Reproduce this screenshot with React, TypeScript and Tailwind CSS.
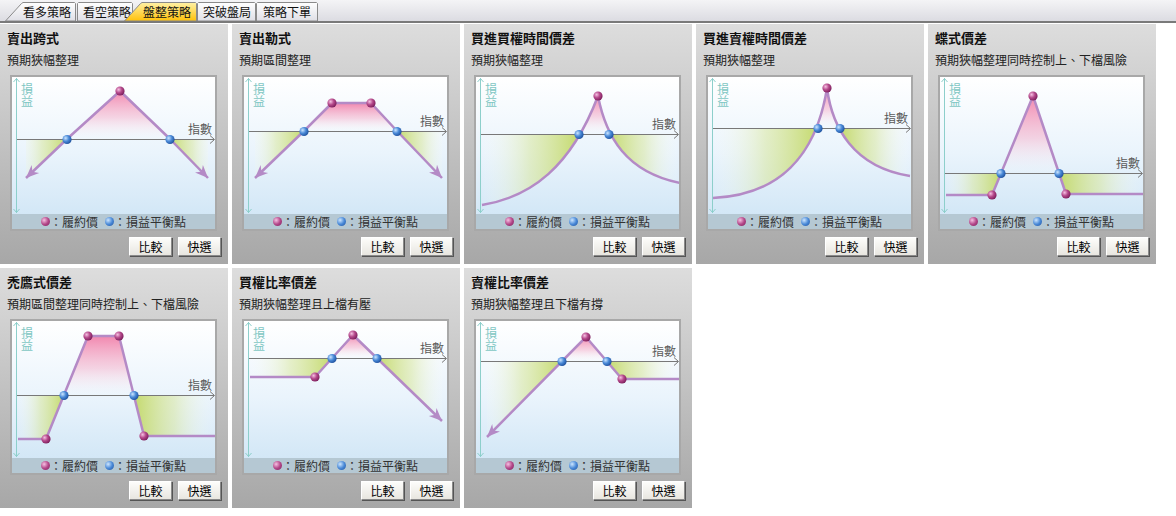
import React from "react";

type Pt = [number, number];

type Strategy = {
  title: string;
  desc: string;
  axisY: number;
  line: string;
  x0: number;
  x1: number;
  top: number;
  mid: number;
  strikes: Pt[];
  bes: Pt[];
  arrows?: [Pt, Pt][];
};

const strategies: Strategy[] = [
  {
    title: "賣出跨式",
    desc: "預期狹幅整理",
    axisY: 62,
    line: "M14,101 L55,62 L108,14 L158,62 L196,101",
    x0: 14,
    x1: 196,
    top: 14,
    mid: 108,
    strikes: [[108, 14]],
    bes: [
      [55, 62],
      [158, 62],
    ],
    arrows: [
      [
        [55, 62],
        [14, 101],
      ],
      [
        [158, 62],
        [196, 101],
      ],
    ],
  },
  {
    title: "賣出勒式",
    desc: "預期區間整理",
    axisY: 54,
    line: "M11,101 L60,54 L88,26 L127,26 L153,54 L198,101",
    x0: 11,
    x1: 198,
    top: 26,
    mid: 108,
    strikes: [
      [88, 26],
      [127, 26],
    ],
    bes: [
      [60, 54],
      [153, 54],
    ],
    arrows: [
      [
        [60, 54],
        [11, 101],
      ],
      [
        [153, 54],
        [198, 101],
      ],
    ],
  },
  {
    title: "買進買權時間價差",
    desc: "預期狹幅整理",
    axisY: 57,
    line: "M6,128 C55,120 95,90 122,19 C130,60 150,95 204,106",
    x0: 6,
    x1: 204,
    top: 19,
    mid: 122,
    strikes: [[122, 19]],
    bes: [
      [103, 57],
      [133, 57],
    ],
  },
  {
    title: "買進賣權時間價差",
    desc: "預期狹幅整理",
    axisY: 51,
    line: "M5,121 C70,118 108,80 119,11 C124,50 145,90 202,99",
    x0: 5,
    x1: 202,
    top: 11,
    mid: 119,
    strikes: [[119, 11]],
    bes: [
      [110, 51],
      [132, 51],
    ],
  },
  {
    title: "蝶式價差",
    desc: "預期狹幅整理同時控制上、下檔風險",
    axisY: 96,
    line: "M6,118 L52,118 L93,19 L126,117 L203,117",
    x0: 6,
    x1: 203,
    top: 19,
    mid: 93,
    strikes: [
      [52, 118],
      [93, 19],
      [126, 117],
    ],
    bes: [
      [61, 96],
      [119, 96],
    ],
  },
  {
    title: "禿鷹式價差",
    desc: "預期區間整理同時控制上、下檔風險",
    axisY: 74,
    line: "M6,118 L34,118 L76,15 L107,15 L132,115 L204,115",
    x0: 6,
    x1: 204,
    top: 15,
    mid: 92,
    strikes: [
      [34, 118],
      [76, 15],
      [107, 15],
      [132, 115],
    ],
    bes: [
      [52, 74],
      [122, 74],
    ],
  },
  {
    title: "買權比率價差",
    desc: "預期狹幅整理且上檔有壓",
    axisY: 37,
    line: "M6,56 L71,56 L109,14 L198,100",
    x0: 6,
    x1: 198,
    top: 14,
    mid: 109,
    strikes: [
      [71, 56],
      [109, 14],
    ],
    bes: [
      [88, 37],
      [133, 37],
    ],
    arrows: [
      [
        [133, 37],
        [198, 100],
      ],
    ],
  },
  {
    title: "賣權比率價差",
    desc: "預期狹幅整理且下檔有撐",
    axisY: 40,
    line: "M11,116 L110,16 L146,58 L204,58",
    x0: 11,
    x1: 204,
    top: 16,
    mid: 110,
    strikes: [
      [110, 16],
      [146, 58],
    ],
    bes: [
      [86, 40],
      [131, 40],
    ],
    arrows: [
      [
        [86, 40],
        [11, 116],
      ],
    ],
  },
];

const tabs = [
  { label: "看多策略", w: 71, slant: true, active: false, cls: "ml-[5px] w-[71px] pl-[18px]" },
  { label: "看空策略", w: 56, slant: false, active: false, cls: "ml-[1px] w-[56px] pl-[6px]" },
  { label: "盤整策略", w: 73, slant: true, active: true, cls: "-ml-[9px] w-[73px] pl-[19px] z-10" },
  { label: "突破盤局", w: 59, slant: false, active: false, cls: "w-[59px] pl-[6px]" },
  { label: "策略下單", w: 62, slant: false, active: false, cls: "w-[62px] pl-[7px]" },
];

// notched arrow head, tip at `to`
function arrowHead(from: Pt, to: Pt) {
  const dx = to[0] - from[0];
  const dy = to[1] - from[1];
  const len = Math.hypot(dx, dy);
  const ux = dx / len;
  const uy = dy / len;
  const nx = -uy;
  const ny = ux;
  const bx = to[0] - ux * 13;
  const by = to[1] - uy * 13;
  const pts = [
    [to[0], to[1]],
    [bx + nx * 5.5, by + ny * 5.5],
    [to[0] - ux * 9, to[1] - uy * 9],
    [bx - nx * 5.5, by - ny * 5.5],
  ];
  return pts.map((p) => p.map((v) => v.toFixed(1)).join(",")).join(" ");
}

function TabShape({ w, slant, active }: { w: number; slant: boolean; active: boolean }) {
  const h = 19;
  const pts = slant
    ? `0.5,${h} 16.5,1.5 18,0.5 ${w - 1.5},0.5 ${w - 0.5},1.5 ${w - 0.5},${h}`
    : `0.5,${h} 0.5,1.5 1.5,0.5 ${w - 1.5},0.5 ${w - 0.5},1.5 ${w - 0.5},${h}`;
  const gid = active ? "tab-on" : "tab-off";
  return (
    <svg width={w} height={h} className="absolute left-0 top-0">
      <defs>
        <linearGradient id={gid} x1="0" y1="0" x2="0" y2="1">
          <stop offset="0" stopColor={active ? "#fff1a6" : "#ffffff"} />
          <stop offset="1" stopColor={active ? "#ffc109" : "#dfdfe6"} />
        </linearGradient>
      </defs>
      <polygon points={pts} fill={`url(#${gid})`} stroke="#8a8a8a" />
    </svg>
  );
}

function Legend() {
  return (
    <div className="h-[15px] bg-[#b5c8d3] flex items-center justify-center gap-[7px] text-[12px] leading-[15px] text-[#333]">
      <span className="flex items-center">
        <i className="block w-[9px] h-[9px] rounded-full bg-[radial-gradient(circle_at_35%_35%,#f6c0e2,#b4488a_50%,#7a1d5a)]" />
        ：履約價
      </span>
      <span className="flex items-center">
        <i className="block w-[9px] h-[9px] rounded-full bg-[radial-gradient(circle_at_35%_35%,#cde6ff,#4a8ad8_50%,#1d4f9c)]" />
        ：損益平衡點
      </span>
    </div>
  );
}

function Chart({ s, id }: { s: Strategy; id: number }) {
  const W = 203;
  const H = 137;
  const fill = `${s.line} L${s.x1},${s.axisY} L${s.x0},${s.axisY} Z`;
  const [b0, b1] = s.bes;
  const ay = s.axisY + 0.5;

  return (
    <div className="ml-[10px] mt-[7px] w-[207px] h-[156px] border-2 border-[#a8a8a8] bg-gradient-to-b from-white via-[#eaf4fc] to-[#cde4f5] flex flex-col">
      <svg width={W} height={H} className="block">
        <defs>
          <linearGradient id={`pk${id}`} gradientUnits="userSpaceOnUse" x1="0" y1={s.top} x2="0" y2={s.axisY}>
            <stop offset="0" stopColor="#f07aa6" stopOpacity="0.9" />
            <stop offset="0.55" stopColor="#f5b4cd" stopOpacity="0.55" />
            <stop offset="1" stopColor="#ffffff" stopOpacity="0.1" />
          </linearGradient>
          <linearGradient id={`gl${id}`} gradientUnits="userSpaceOnUse" x1={b0[0]} y1="0" x2="4" y2="0">
            <stop offset="0" stopColor="#c2d865" stopOpacity="0.95" />
            <stop offset="0.5" stopColor="#d9e79f" stopOpacity="0.55" />
            <stop offset="1" stopColor="#ffffff" stopOpacity="0" />
          </linearGradient>
          <linearGradient id={`gr${id}`} gradientUnits="userSpaceOnUse" x1={b1[0]} y1="0" x2={W} y2="0">
            <stop offset="0" stopColor="#c2d865" stopOpacity="0.95" />
            <stop offset="0.5" stopColor="#d9e79f" stopOpacity="0.55" />
            <stop offset="1" stopColor="#ffffff" stopOpacity="0" />
          </linearGradient>
          <radialGradient id={`dm${id}`} cx="0.35" cy="0.35" r="0.7">
            <stop offset="0" stopColor="#f6c0e2" />
            <stop offset="0.5" stopColor="#b4488a" />
            <stop offset="1" stopColor="#7a1d5a" />
          </radialGradient>
          <radialGradient id={`db${id}`} cx="0.35" cy="0.35" r="0.7">
            <stop offset="0" stopColor="#cde6ff" />
            <stop offset="0.5" stopColor="#4a8ad8" />
            <stop offset="1" stopColor="#1d4f9c" />
          </radialGradient>
          <clipPath id={`ca${id}`}>
            <rect x="0" y="0" width={W} height={s.axisY} />
          </clipPath>
          <clipPath id={`cl${id}`}>
            <rect x="0" y={s.axisY} width={s.mid} height={H} />
          </clipPath>
          <clipPath id={`cr${id}`}>
            <rect x={s.mid} y={s.axisY} width={W} height={H} />
          </clipPath>
        </defs>

        {/* profit / loss areas */}
        <path d={fill} fill={`url(#pk${id})`} clipPath={`url(#ca${id})`} />
        <path d={fill} fill={`url(#gl${id})`} clipPath={`url(#cl${id})`} />
        <path d={fill} fill={`url(#gr${id})`} clipPath={`url(#cr${id})`} />

        {/* axes */}
        <line x1="4.5" y1="1" x2="4.5" y2="136" stroke="#8dcfcb" />
        <polyline points="1.5,5 4.5,1.5 7.5,5" fill="none" stroke="#8dcfcb" />
        <polyline points="1.5,132 4.5,135.5 7.5,132" fill="none" stroke="#8dcfcb" />
        <line x1="5" y1={ay} x2="202" y2={ay} stroke="#787878" />
        <polyline points={`198,${ay - 4} 202.5,${ay} 198,${ay + 4}`} fill="none" stroke="#787878" />

        {/* payoff line */}
        <path d={s.line} fill="none" stroke="#b48ac6" strokeWidth="2.5" strokeLinejoin="round" />
        {s.arrows?.map(([f, t], i) => (
          <polygon key={i} points={arrowHead(f, t)} fill="#b48ac6" />
        ))}

        {s.bes.map(([x, y], i) => (
          <circle key={`b${i}`} cx={x} cy={y + 0.5} r="4.6" fill={`url(#db${id})`} />
        ))}
        {s.strikes.map(([x, y], i) => (
          <circle key={`s${i}`} cx={x} cy={y} r="4.6" fill={`url(#dm${id})`} />
        ))}

        <text x="15" y="6" fontSize="12" fill="#7fc7c3" style={{ writingMode: "vertical-rl" }}>
          損益
        </text>
        <text x="176" y={s.axisY - 5} fontSize="12" fill="#5a5a5a">
          指數
        </text>
      </svg>
      <Legend />
    </div>
  );
}

function Btn({ children }: { children: React.ReactNode }) {
  return (
    <button className="w-[43px] h-[19px] text-[12px] leading-[17px] text-black bg-gradient-to-b from-[#fdfdfb] to-[#e8e6e0] border border-white border-r-[#8a8a8a] border-b-[#8a8a8a] shadow-[1px_1px_0_#555]">
      {children}
    </button>
  );
}

function Card({ s, id }: { s: Strategy; id: number }) {
  return (
    <div className="w-[228px] h-[240px] flex flex-col bg-gradient-to-b from-[#dddddd] to-[#a7a7a7]">
      <div className="pl-[7px] pt-[6px] text-[13px] font-bold leading-[16px] text-[#111]">{s.title}</div>
      <div className="pl-[7px] mt-[6px] text-[12px] leading-[16px] text-[#222]">{s.desc}</div>
      <Chart s={s} id={id} />
      <div className="flex justify-end gap-[6px] pr-[7px] mt-[6px]">
        <Btn>比較</Btn>
        <Btn>快選</Btn>
      </div>
    </div>
  );
}

export default function App() {
  return (
    <div className="w-[1176px] h-[516px] bg-white overflow-hidden font-['Noto_Sans_CJK_TC','Noto_Sans',sans-serif]">
      {/* strategy tabs */}
      <div className="h-[23px] flex items-end bg-gradient-to-b from-[#f4f4f6] to-[#dcdce2] border-b-2 border-[#7a7a7a]">
        {tabs.map((t) => (
          <div key={t.label} className={`relative h-[19px] flex items-center ${t.cls}`}>
            <TabShape w={t.w} slant={t.slant} active={t.active} />
            <span className="relative text-[12px] leading-[19px] text-[#111]">{t.label}</span>
          </div>
        ))}
      </div>

      <div className="grid grid-cols-[repeat(5,228px)] gap-[4px] mt-[1px]">
        {strategies.map((s, i) => (
          <Card key={s.title} s={s} id={i} />
        ))}
      </div>
    </div>
  );
}
